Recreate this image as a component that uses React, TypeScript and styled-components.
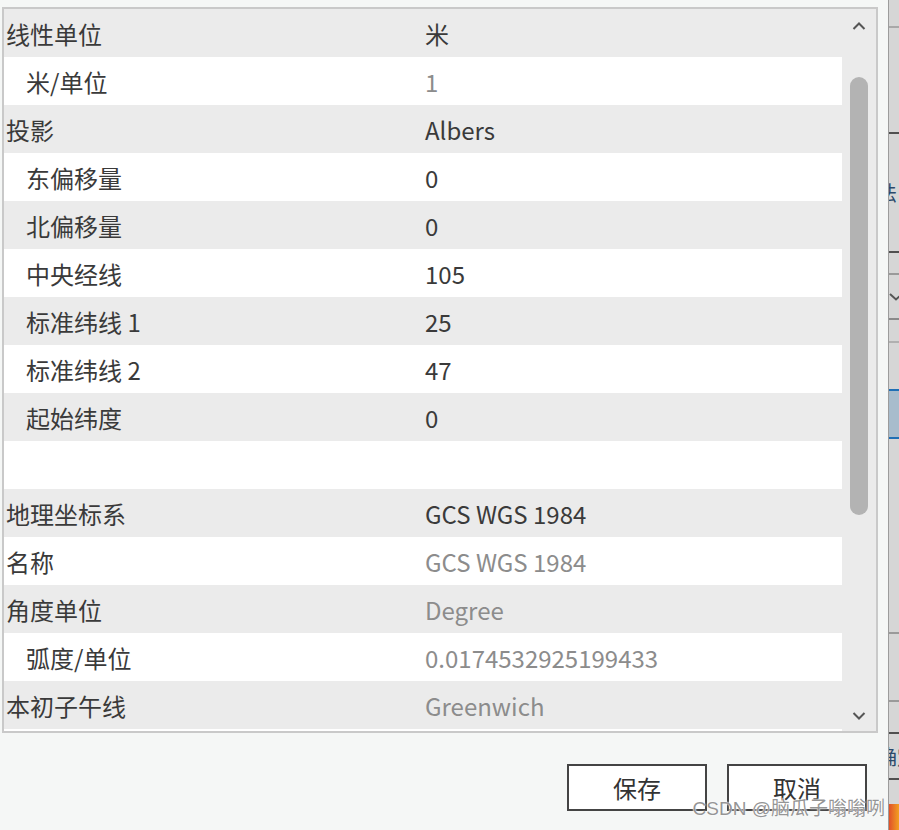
import React from 'react';
import styled, { createGlobalStyle } from 'styled-components';

type Row = {
  label: string;
  value: string;
  indent?: boolean;
  muted?: boolean;
};

const rows: Row[] = [
  { label: '线性单位', value: '米' },
  { label: '米/单位', value: '1', indent: true, muted: true },
  { label: '投影', value: 'Albers' },
  { label: '东偏移量', value: '0', indent: true },
  { label: '北偏移量', value: '0', indent: true },
  { label: '中央经线', value: '105', indent: true },
  { label: '标准纬线 1', value: '25', indent: true },
  { label: '标准纬线 2', value: '47', indent: true },
  { label: '起始纬度', value: '0', indent: true },
  { label: '', value: '' },
  { label: '地理坐标系', value: 'GCS WGS 1984' },
  { label: '名称', value: 'GCS WGS 1984', muted: true },
  { label: '角度单位', value: 'Degree', muted: true },
  { label: '弧度/单位', value: '0.0174532925199433', indent: true, muted: true },
  { label: '本初子午线', value: 'Greenwich', muted: true },
  { label: '', value: '' },
];

// the window behind the dialog, only its left edge shows
const backStrip = [
  { h: 28, line: '#a8a8a8' },
  { h: 106, line: '#505050' },
  { h: 119, line: '#505050', text: '法' },
  { h: 22, line: '#9a9a9a' },
  { h: 45, line: '#8a8a8a', chevron: true },
  { h: 23, line: '#b0b0b0' },
  { h: 48, line: '#1f6fb5' },
  { h: 48, line: '#1f6fb5', selected: true },
  { h: 195, line: '#9a9a9a' },
  { h: 68, line: '#9a9a9a' },
  { h: 32, line: '#505050' },
  { h: 46, line: '#505050', text: '确定' },
  { h: 24, line: 'transparent' },
];

function App() {
  return (
    <>
      <GlobalStyle />
      <Page>
        <Dialog>
          <Panel>
            <List>
              {rows.map((r, i) => (
                <RowLine key={i} $odd={i % 2 === 1}>
                  <Label $indent={r.indent}>{r.label}</Label>
                  <Value $muted={r.muted}>{r.value}</Value>
                </RowLine>
              ))}
            </List>
            <ScrollTrack>
              <Arrow viewBox="0 0 14 8">
                <path d="M1.5 7 L7 1.5 L12.5 7" />
              </Arrow>
              <Thumb />
              <Arrow viewBox="0 0 14 8">
                <path d="M1.5 1 L7 6.5 L12.5 1" />
              </Arrow>
            </ScrollTrack>
          </Panel>
          <Footer>
            <Button>保存</Button>
            <Button>取消</Button>
            <Watermark>CSDN @脑瓜子嗡嗡咧</Watermark>
          </Footer>
        </Dialog>
        <BackWindow>
          {backStrip.map((s, i) => (
            <BackCell key={i} $h={s.h} $line={s.line} $selected={s.selected}>
              {s.text && <BackText>{s.text}</BackText>}
              {s.chevron && (
                <BackChevron viewBox="0 0 14 8">
                  <path d="M1 1 L7 6.5 L13 1" />
                </BackChevron>
              )}
            </BackCell>
          ))}
          <BackImage />
        </BackWindow>
      </Page>
    </>
  );
}

export default App;

const GlobalStyle = createGlobalStyle`
  body {
    margin: 0;
    background: #f5f7f6;
    font-family: "Noto Sans CJK SC", "Noto Sans", sans-serif;
  }
`;

const Page = styled.div`
  width: 899px;
  height: 830px;
  display: flex;
  overflow: hidden;
  background: #f5f7f6;
`;

const Dialog = styled.div`
  width: 888px;
  display: flex;
  flex-direction: column;
  padding: 7px 0 0 2px;
  box-sizing: border-box;
  position: relative;
`;

const Panel = styled.div`
  width: 876px;
  height: 726px;
  box-sizing: border-box;
  border: 2px solid #c9c9c9;
  background: #ebebeb;
  display: flex;
  overflow: hidden;
`;

const List = styled.div`
  width: 838px;
  display: flex;
  flex-direction: column;
`;

const RowLine = styled.div<{ $odd: boolean }>`
  flex: 0 0 48px;
  display: flex;
  align-items: center;
  background: ${(p) => (p.$odd ? '#ffffff' : '#ebebeb')};
  font-size: 24px;
  color: #3a3a3a;
`;

const Label = styled.div<{ $indent?: boolean }>`
  width: 421px;
  padding-left: ${(p) => (p.$indent ? '22px' : '2px')};
  box-sizing: border-box;
  white-space: nowrap;
`;

const Value = styled.div<{ $muted?: boolean }>`
  color: ${(p) => (p.$muted ? '#8c8c8c' : '#3a3a3a')};
  white-space: nowrap;
`;

const ScrollTrack = styled.div`
  width: 34px;
  display: flex;
  flex-direction: column;
  align-items: center;
  padding: 13px 0 0 0;
  box-sizing: border-box;
`;

const Arrow = styled.svg`
  width: 14px;
  height: 8px;
  flex: none;
  fill: none;
  stroke: #555;
  stroke-width: 2;
`;

const Thumb = styled.div`
  width: 18px;
  height: 438px;
  margin: 47px 0 197px;
  border-radius: 9px;
  background: #b3b3b3;
`;

const Footer = styled.div`
  flex: 1;
  display: flex;
  justify-content: flex-end;
  gap: 20px;
  padding: 31px 21px 0 0;
  position: relative;
`;

const Button = styled.button`
  width: 140px;
  height: 47px;
  border: 2px solid #444;
  background: #fff;
  color: #333;
  font-family: "Noto Sans CJK SC", sans-serif;
  font-size: 24px;
  padding: 0;
`;

const Watermark = styled.div`
  position: absolute;
  right: 3px;
  top: 60px;
  font-family: "Liberation Sans", "Noto Sans CJK SC", sans-serif;
  font-size: 19px;
  color: rgba(130, 130, 130, 0.85);
  text-shadow: 0 0 2px #fff, 0 0 1px #fff;
  white-space: nowrap;
`;

const BackWindow = styled.div`
  flex: 1;
  display: flex;
  flex-direction: column;
  border-left: 1px solid #9c9c9c;
  background: #d6d6d6;
  overflow: hidden;
`;

const BackCell = styled.div<{ $h: number; $line: string; $selected?: boolean }>`
  flex: 0 0 ${(p) => p.$h}px;
  box-sizing: border-box;
  border-bottom: 2px solid ${(p) => p.$line};
  background: ${(p) => (p.$selected ? '#a8bccc' : 'transparent')};
  display: flex;
  align-items: center;
  overflow: hidden;
`;

const BackText = styled.span`
  margin-left: -12px;
  font-size: 20px;
  color: #2b4a6b;
  white-space: nowrap;
`;

const BackChevron = styled.svg`
  width: 14px;
  height: 8px;
  flex: none;
  fill: none;
  stroke: #555;
  stroke-width: 2;
`;

const BackImage = styled.div`
  flex: 1;
  background: linear-gradient(90deg, #e0502a, #f2a020);
`;
